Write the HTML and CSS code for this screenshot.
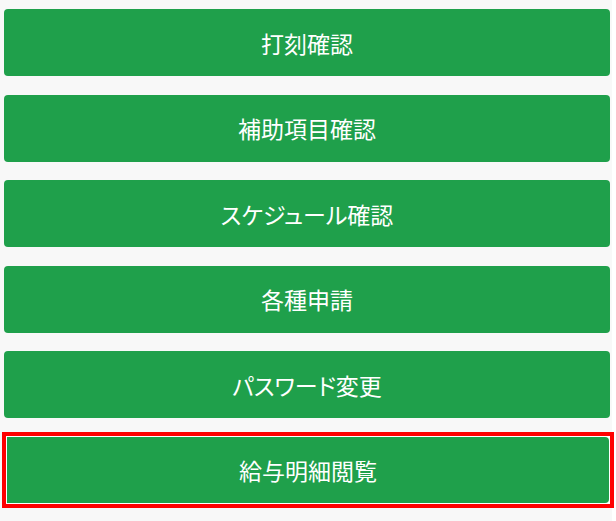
FILE: index.html
```html
<!DOCTYPE html>
<html lang="ja">
<head>
<meta charset="utf-8">
<title>メニュー</title>
<link rel="stylesheet" href="styles.css">
</head>
<body>
<div class="menu">
  <button class="menu-btn">打刻確認</button>
  <button class="menu-btn">補助項目確認</button>
  <button class="menu-btn">スケジュール確認</button>
  <button class="menu-btn">各種申請</button>
  <button class="menu-btn">パスワード変更</button>
  <div class="focus-frame">
    <button class="menu-btn inner">給与明細閲覧</button>
  </div>
</div>
</body>
</html>
```
FILE: styles.css
```css
html, body {
  margin: 0;
  padding: 0;
  background: #ffffff;
}
body {
  font-family: "Noto Sans CJK JP", "Noto Sans", sans-serif;
}
.menu {
  width: 612px;
  background: #f8f8f8;
  padding: 9px 0 13px 0;
  display: flex;
  flex-direction: column;
  gap: 18.5px;
  min-height: 499px;
  box-sizing: border-box;
}
.menu-btn {
  display: block;
  margin: 0 0 0 4px;
  width: 606px;
  height: 67px;
  border: none;
  border-radius: 4px;
  background: #1fa04b;
  color: #ffffff;
  font-family: "Noto Sans CJK JP", "Noto Sans", sans-serif;
  font-size: 23px;
  font-weight: 400;
  font-feature-settings: "palt" 1;
  padding: 0;
  cursor: pointer;
}
.focus-frame {
  margin: -4.5px 0 0 2px;
  width: 612px;
  box-sizing: border-box;
  border: 4px solid #ff0000;
  padding: 1px;
  background: #ffffff;
}
.menu-btn.inner {
  margin: 0;
  width: 100%;
  height: 66px;
  border-radius: 0 4px 4px 0;
}
```
